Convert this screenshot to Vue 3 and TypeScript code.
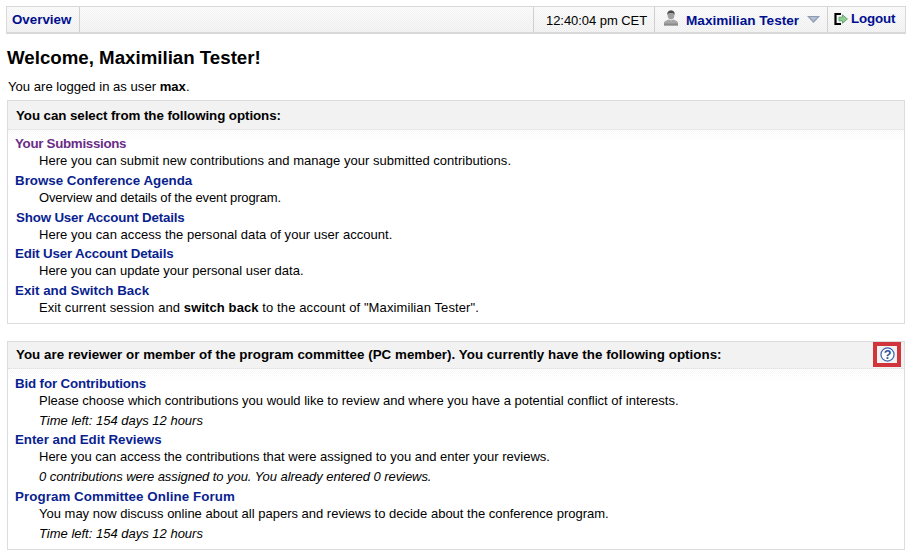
<script setup lang="ts">
interface Option {
  title: string;
  text: string;
  visited?: boolean;
  note?: string;
  // small letter-spacing corrections, in px
  titleTrack?: number;
  textTrack?: number;
  noteTrack?: number;
  titleInset?: boolean;
}

const userOptions: Option[] = [
  {
    title: "Your Submissions",
    text: "Here you can submit new contributions and manage your submitted contributions.",
    visited: true,
    titleTrack: -0.3,
    textTrack: 0.03,
  },
  {
    title: "Browse Conference Agenda",
    text: "Overview and details of the event program.",
    textTrack: -0.14,
  },
  {
    title: "Show User Account Details",
    text: "Here you can access the personal data of your user account.",
    titleTrack: -0.17,
    textTrack: 0.05,
    titleInset: true,
  },
  {
    title: "Edit User Account Details",
    text: "Here you can update your personal user data.",
    titleTrack: -0.16,
  },
];

const pcOptions: Option[] = [
  {
    title: "Bid for Contributions",
    text: "Please choose which contributions you would like to review and where you have a potential conflict of interests.",
    note: "Time left: 154 days 12 hours",
    titleTrack: -0.14,
  },
  {
    title: "Enter and Edit Reviews",
    text: "Here you can access the contributions that were assigned to you and enter your reviews.",
    note: "0 contributions were assigned to you. You already entered 0 reviews.",
    titleTrack: -0.04,
    noteTrack: -0.06,
  },
  {
    title: "Program Committee Online Forum",
    text: "You may now discuss online about all papers and reviews to decide about the conference program.",
    note: "Time left: 154 days 12 hours",
    titleTrack: 0.07,
  },
];

const spacing = (track?: number) => (track ? { letterSpacing: `${track}px` } : undefined);
</script>

<template>
  <div class="page">
    <nav class="topbar">
      <a class="cell nav-link overview">Overview</a>
      <div class="spacer"></div>
      <div class="cell clock">12:40:04 pm CET</div>
      <div class="cell user">
        <svg class="user-icon" width="16" height="16" viewBox="0 0 16 16">
          <path d="M1 15.5V13C1 11 4 10.2 6 9.5L8 10.5L10 9.5C12 10.2 15 11 15 13V15.5Z" fill="#a6a6a6" />
          <path d="M1 13.5H15V15.5H1Z" fill="#8a8a8a" />
          <ellipse cx="8" cy="5" rx="3.4" ry="4.4" fill="#a0a0a0" />
          <path d="M4.4 5C4 1.5 6 .5 8 .5S12 1.5 11.6 5C11 3.2 10 3 8 3S5 3.2 4.4 5Z" fill="#4a4a4a" />
        </svg>
        <a class="nav-link">Maximilian Tester</a>
        <svg class="caret" width="13" height="7" viewBox="0 0 13 7">
          <path d="M0 0H13L6.5 7Z" fill="#8d9ab4" />
          <path d="M2.5 1H10.5L6.5 5.2Z" fill="#b4bfd2" />
        </svg>
      </div>
      <div class="cell logout">
        <svg width="14" height="14" viewBox="0 0 14 14">
          <path d="M7 2H1.5V12H7" fill="none" stroke="#000" stroke-width="2.2" />
          <path d="M5 5.2H8.5V2.8L13.4 7L8.5 11.2V8.8H5Z" fill="#8fd08f" stroke="#5f9f6f" stroke-width="0.9" />
        </svg>
        <a class="nav-link">Logout</a>
      </div>
    </nav>

    <h1>Welcome, Maximilian Tester!</h1>
    <p class="login-line">You are logged in as user <b>max</b>.</p>

    <section class="panel first">
      <header class="panel-head">You can select from the following options:</header>
      <div class="panel-body">
        <div v-for="opt in userOptions" :key="opt.title" class="option">
          <a
            class="option-title"
            :class="{ visited: opt.visited, inset: opt.titleInset }"
            :style="spacing(opt.titleTrack)"
          >{{ opt.title }}</a>
          <div class="option-text" :style="spacing(opt.textTrack)">{{ opt.text }}</div>
        </div>
        <div class="option">
          <a class="option-title">Exit and Switch Back</a>
          <div class="option-text exit-text">
            Exit current session and <b>switch back</b> to the account of "Maximilian Tester".
          </div>
        </div>
      </div>
    </section>

    <section class="panel second">
      <header class="panel-head">
        <span>You are reviewer or member of the program committee (PC member). You currently have the following options:</span>
        <span class="help">
          <svg width="15" height="15" viewBox="0 0 16 16">
            <circle cx="8" cy="8" r="7" fill="#fff" stroke="#3f62a8" stroke-width="1.3" />
            <text x="8" y="12.6" text-anchor="middle" class="help-mark">?</text>
          </svg>
        </span>
      </header>
      <div class="panel-body">
        <div v-for="opt in pcOptions" :key="opt.title" class="option">
          <a class="option-title" :style="spacing(opt.titleTrack)">{{ opt.title }}</a>
          <div class="option-text" :style="spacing(opt.textTrack)">{{ opt.text }}</div>
          <div class="option-text note" :style="spacing(opt.noteTrack)">{{ opt.note }}</div>
        </div>
      </div>
    </section>
  </div>
</template>

<style scoped>
.page {
  box-sizing: border-box;
  width: 910px;
  height: 557px;
  padding: 6px 4px 0 6px;
  overflow: hidden;
  background: #fff;
  color: #000;
  font-family: "Liberation Sans", Arial, sans-serif;
  font-size: 13px;
}

.topbar {
  display: flex;
  align-items: stretch;
  height: 28px;
  box-sizing: border-box;
  border: 1px solid #d9d9d9;
  border-bottom-width: 2px;
  background:
    repeating-conic-gradient(rgba(255, 255, 255, 0.45) 0 25%, transparent 0 50%) 0 0 / 2px 2px,
    linear-gradient(#f7f7f7, #ededed);
}

.cell {
  display: flex;
  align-items: center;
  border-right: 1px solid #d0d0d0;
}

.cell:last-child {
  border-right: 0;
}

.spacer {
  flex: 1;
  border-right: 1px solid #d0d0d0;
}

.nav-link {
  color: #000f8f;
  font-size: 13.33px;
  font-weight: 700;
  text-decoration: none;
}

.overview {
  width: 73px;
  box-sizing: border-box;
  padding-left: 5px;
}

.clock {
  width: 121px;
  box-sizing: border-box;
  padding-left: 12px;
  padding-top: 1px;
  letter-spacing: -0.05px;
}

.user {
  width: 173px;
  box-sizing: border-box;
  padding: 0 0 0 8px;
  gap: 7px;
}

.user .nav-link {
  font-size: 13.6px;
  padding-top: 2px;
}

.user-icon {
  margin-bottom: 3px;
}

.caret {
  margin-left: 1px;
}

.logout {
  flex: none;
  width: 77px;
  box-sizing: border-box;
  gap: 3px;
  padding: 0 0 2px 6px;
}

.logout .nav-link {
  letter-spacing: -0.15px;
}

h1 {
  margin: 12px 0 0 1px;
  font-size: 18.7px;
  line-height: 23px;
  font-weight: 700;
}

.login-line {
  margin: 10px 0 0 2px;
  font-size: 13.1px;
  line-height: 16px;
}

.panel {
  width: 898px;
  margin: 5px 0 0 1px;
  box-sizing: border-box;
  border: 1px solid #dcdcdc;
}

.panel + .panel {
  margin-top: 17px;
}

.panel-head {
  display: flex;
  justify-content: space-between;
  box-sizing: border-box;
  height: 29px;
  padding: 0 3px 0 8px;
  line-height: 30px;
  background: #f2f2f2;
  border-bottom: 1px dotted #dedede;
  font-size: 13.33px;
  font-weight: 700;
  letter-spacing: -0.07px;
}

.second .panel-head {
  height: 27px;
  line-height: 25px;
  letter-spacing: 0.04px;
}

.panel-body {
  padding: 4px 7px 5px;
  background:
    repeating-conic-gradient(#fff 0 25%, transparent 0 50%) 0 0 / 2px 2px no-repeat,
    linear-gradient(#f6f6f6, #fff 12px);
  background-size: 2px 2px, auto;
  background-repeat: repeat, no-repeat;
}

.second .panel-body {
  padding-top: 5px;
  padding-bottom: 6px;
}

.option {
  padding-bottom: 1px;
}

.option-title {
  display: block;
  margin-bottom: -1px;
  line-height: 20px;
  color: #0a1f8f;
  font-size: 13.33px;
  font-weight: 700;
}

.option-title.visited {
  color: #6b2c86;
}

.option-title.inset {
  margin-left: 1px;
}

.option-text {
  margin-left: 24px;
  line-height: 16.75px;
}

.exit-text {
  letter-spacing: 0.1px;
}

.note {
  margin-top: 3px;
  font-style: italic;
}

.help {
  display: flex;
  align-items: center;
  justify-content: center;
  box-sizing: border-box;
  width: 28px;
  height: 25px;
  border: 4px solid #d1343a;
}

.help-mark {
  fill: #2f4f9a;
  font-size: 13.5px;
  font-weight: 700;
  letter-spacing: 0;
  font-family: "Liberation Sans", Arial, sans-serif;
}
</style>

<style>
html,
body {
  margin: 0;
  background: #fff;
}
</style>
